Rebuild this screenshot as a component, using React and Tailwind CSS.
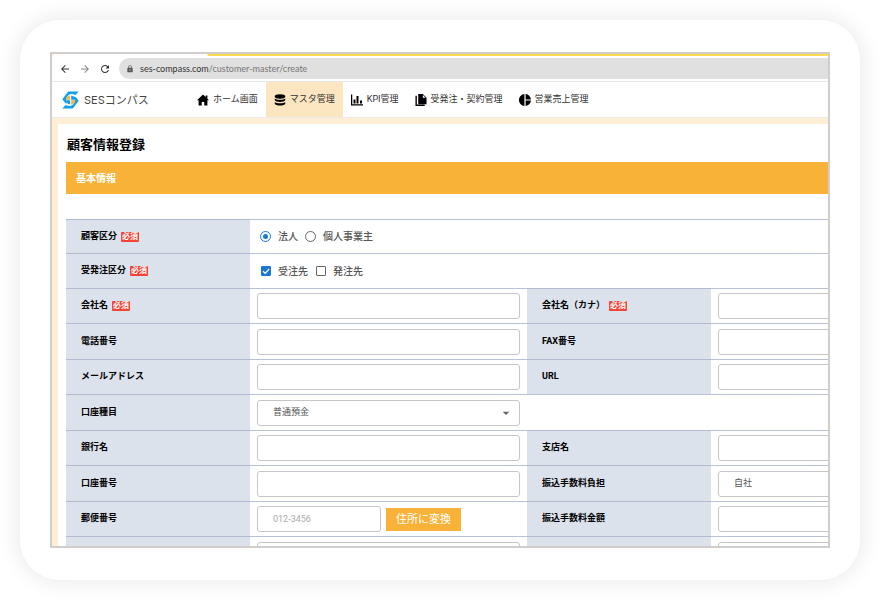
import { clsx } from 'clsx'
import { MdArrowBack, MdArrowDropDown, MdArrowForward, MdLock, MdPieChart, MdRefresh } from 'react-icons/md'

const NAV_ITEMS = [
  { label: 'ホーム画面',       icon: HomeIcon },
  { label: 'マスタ管理',       icon: DatabaseIcon, active: true },
  { label: 'KPI管理',          icon: StatsIcon },
  { label: '受発注・契約管理', icon: FilesIcon },
  { label: '営業売上管理',     icon: PieIcon },
]

/* Each row holds one or two fields; a single field spans the whole row */
const ROWS = [
  [{ id: 'kind', label: '顧客区分', required: true, type: 'radio', options: ['法人', '個人事業主'] }],
  [{ id: 'order', label: '受発注区分', required: true, type: 'checkbox', options: ['受注先', '発注先'] }],
  [{ id: 'company', label: '会社名', required: true }, { id: 'kana', label: '会社名（カナ）', required: true }],
  [{ id: 'tel', label: '電話番号' }, { id: 'fax', label: 'FAX番号' }],
  [{ id: 'mail', label: 'メールアドレス' }, { id: 'url', label: 'URL' }],
  [{ id: 'account-type', label: '口座種目', type: 'select', options: ['普通預金', '当座預金'] }],
  [{ id: 'bank', label: '銀行名' }, { id: 'branch', label: '支店名' }],
  [{ id: 'account', label: '口座番号' }, { id: 'fee-side', label: '振込手数料負担', type: 'select', options: ['自社', '先方'] }],
  [{ id: 'zip', label: '郵便番号', type: 'zip' }, { id: 'fee', label: '振込手数料金額' }],
  [{ id: 'address', label: '' }, { id: 'note', label: '' }],
]

const BOX = 'h-[26px] rounded-[3px] border border-[#c6c6c6] bg-white px-[15px] text-[9px] text-[#555] placeholder:text-[#aaa]'

/* ── Icons ─── */
function HomeIcon({ className }) {
  return (
    <svg viewBox="0 0 24 24" fill="currentColor" className={className} aria-hidden="true">
      <path d="M12 1 0 12.5h3.2V23h6.3v-7h5v7h6.3V12.5H24l-3.2-3.1V3h-3.6v3z" />
    </svg>
  )
}

function DatabaseIcon({ className }) {
  return (
    <svg viewBox="0 0 24 24" fill="currentColor" className={className} aria-hidden="true">
      <ellipse cx="12" cy="5" rx="10.5" ry="4.5" />
      <path d="M1.500 9c2 3.600 19 3.600 21 0v3c-1 5-20 5-21 0z" />
      <path d="M1.500 16c2 3.600 19 3.600 21 0v3c-1 5.500-20 5.500-21 0z" />
    </svg>
  )
}

function StatsIcon({ className }) {
  return (
    <svg viewBox="0 0 24 24" fill="currentColor" className={className} aria-hidden="true">
      <path d="M0 1h2.5v19.5H24V23H0z" />
      <path d="M5 11h4v8H5zM11 4h4v15h-4zM18 13h4v6h-4z" />
    </svg>
  )
}

function FilesIcon({ className }) {
  return (
    <svg viewBox="0 0 24 26" fill="currentColor" className={className} aria-hidden="true">
      <path d="M6 0h10l8 8v14H6zM16 2v6h6z" fillRule="evenodd" />
      <path d="M0 4h3v19h17v3H0z" />
    </svg>
  )
}

function PieIcon({ className }) {
  return <MdPieChart viewBox="2 2 20 20" className={className} />
}

function Logo() {
  return (
    <svg viewBox="0 0 52 54" className="h-[18px] w-[17px] shrink-0" aria-hidden="true">
      <path fill="#119fe8" d="M19 1h32L41 12C32 7 24 8 17 15c-6 7-6 15-1 23l-6-2L1 25z" />
      <path fill="#119fe8" d="M33 53H1l10-11c9 5 17 4 24-3 6-7 6-15 1-23l6 2 9 11z" />
      <path fill="#f8b237" d="M25 13v13H12c1-8 6-12 13-13zM28 41V28h13c-1 8-6 12-13 13z" />
      <path fill="#119fe8" d="M28 13c7 1 12 5 13 13H28zM25 41c-7-1-12-5-13-13h13z" />
    </svg>
  )
}

/* ── Browser bar ─── */
function BrowserBar() {
  return (
    <>
      <div className="flex h-[2px] shrink-0 bg-[#ffd94f]">
        <div className="w-[156px] rounded-t-sm bg-white" />
      </div>
      <div className="flex h-[26px] shrink-0 items-center border-b border-[#e6e8ea] bg-white text-[#333]">
        <div className="flex w-[67px] items-center gap-2 pl-[7px]">
          <button type="button" aria-label="戻る"><MdArrowBack className="size-3" /></button>
          <button type="button" aria-label="進む" className="text-[#888]"><MdArrowForward className="size-3" /></button>
          <button type="button" aria-label="再読み込み"><MdRefresh className="size-3" /></button>
        </div>
        <div className="flex h-[21px] flex-1 items-center gap-1.5 rounded-l-full bg-[#e0e0e0] pl-[7px] font-[Lato,sans-serif] text-[9px]">
          <MdLock className="size-2 text-[#555]" />
          <span className="whitespace-nowrap text-[#777]"><span className="text-[#333]">ses-compass.com</span>/customer-master/create</span>
        </div>
      </div>
    </>
  )
}

/* ── Site header ─── */
function Header() {
  return (
    <header className="flex h-9 shrink-0 border-b border-[#ecebe6] bg-white">
      <a href="#top" className="flex w-[137px] shrink-0 items-center gap-[5px] pl-2.5 font-[Inter,'Noto_Sans_CJK_JP',sans-serif] text-[11px] whitespace-nowrap text-[#444]">
        <Logo />
        <span className="pt-0.5">SESコンパス</span>
      </a>
      <nav className="flex">
        {NAV_ITEMS.map(({ label, icon: Icon, active }) => (
          <a
            key={label}
            href="#nav"
            className={clsx('flex items-center gap-1 px-2 text-[9px] whitespace-nowrap text-[#333]', active && 'bg-[#fce6c2]')}
          >
            <Icon className="size-3 shrink-0 text-black" />
            {label}
          </a>
        ))}
      </nav>
    </header>
  )
}

/* ── Form controls ─── */
function Choices({ field }) {
  const isRadio = field.type === 'radio'
  return (
    <div className="flex items-center gap-[7px] pl-[3px]">
      {field.options.map((option, i) => (
        <label key={option} className="flex items-center gap-[7px] text-[10px] font-medium text-[#555]">
          <span className="grid size-[11px] place-items-center">
            <input
              type={field.type}
              name={field.id}
              defaultChecked={i === 0}
              className={clsx(
                'peer col-start-1 row-start-1 appearance-none border border-[#666] checked:border-[#1976d2]',
                isRadio ? 'size-[11px] rounded-full' : 'size-[10px] rounded-[1px] checked:bg-[#1976d2]',
              )}
            />
            {isRadio ? (
              <span className="pointer-events-none col-start-1 row-start-1 hidden size-[5px] rounded-full bg-[#1976d2] peer-checked:block" />
            ) : (
              <svg viewBox="0 0 10 10" className="pointer-events-none col-start-1 row-start-1 hidden size-[10px] peer-checked:block" aria-hidden="true">
                <path d="M2 5.2 4.2 7.3 8.2 3" fill="none" stroke="#fff" strokeWidth="1.2" />
              </svg>
            )}
          </span>
          {option}
        </label>
      ))}
    </div>
  )
}

function Control({ field }) {
  if (field.type === 'radio' || field.type === 'checkbox') return <Choices field={field} />

  if (field.type === 'select') {
    return (
      <div className="grid w-[263px] items-center">
        <select id={field.id} className={clsx(BOX, 'col-start-1 row-start-1 appearance-none')}>
          {field.options.map((option) => <option key={option}>{option}</option>)}
        </select>
        <MdArrowDropDown className="pointer-events-none col-start-1 row-start-1 mr-1.5 size-4 justify-self-end text-[#666]" />
      </div>
    )
  }

  if (field.type === 'zip') {
    return (
      <div className="flex items-center gap-[5px]">
        <input id={field.id} type="text" placeholder="012-3456" className={clsx(BOX, 'w-[124px]')} />
        <button type="button" className="h-[23px] bg-[#f8b237] px-2.5 text-[11px] leading-none text-white">住所に変換</button>
      </div>
    )
  }

  return <input id={field.id} type="text" aria-label={field.label || field.id} className={clsx(BOX, 'block w-[263px]')} />
}

function FieldCells({ field, span }) {
  const isGroup = field.type === 'radio' || field.type === 'checkbox'
  const Tag = isGroup ? 'span' : 'label'
  return (
    <>
      <th scope="row" className="border-t border-[#b1bad2] bg-[#dce2ec] pl-[15px] text-left text-[9px] font-bold text-black">
        <div className="flex items-center gap-1">
          <Tag htmlFor={isGroup ? undefined : field.id}>{field.label}</Tag>
          {field.required && (
            <span className="rounded-[1px] bg-[#f44336] px-px text-[8px] leading-[10px] text-white">必須</span>
          )}
        </div>
      </th>
      <td colSpan={span} className="border-t border-[#b9c1d4] px-[7px]">
        <Control field={field} />
      </td>
    </>
  )
}

export default function App() {
  return (
    <div className="h-screen bg-white p-5 font-[Roboto,'Noto_Sans_CJK_JP',sans-serif]">
      <div className="flex h-full rounded-[40px] bg-white px-[30px] py-8 shadow-[0_0_24px_rgba(0,0,0,0.1)]">
        <div className="flex min-w-0 flex-1 flex-col overflow-hidden border-2 border-[#d0cdcb]">
          <BrowserBar />
          <Header />
          <div className="min-h-0 flex-1 overflow-hidden bg-[#fdeed5] pt-1.5 pl-1.5">
            <main className="bg-white pl-2">
              <h1 className="flex h-[38px] items-center pt-1 pl-px text-[13px] font-bold text-black">顧客情報登録</h1>
              <h2 className="mb-[25px] flex h-8 items-center bg-[#f8b237] pl-2.5 text-[10px] font-bold text-white">基本情報</h2>
              <table className="w-[922px] table-fixed border-separate border-spacing-0">
                <colgroup>
                  <col className="w-[184px]" />
                  <col className="w-[277px]" />
                  <col className="w-[184px]" />
                  <col className="w-[277px]" />
                </colgroup>
                <tbody>
                  {ROWS.map((fields, i) => (
                    <tr key={fields[0].id} className={clsx(i === 0 && 'h-[34px]', i > 0 && (i < 3 || i % 2 === 0) && 'h-[35px]', i >= 3 && i % 2 === 1 && 'h-9')}>
                      {fields.map((field) => (
                        <FieldCells key={field.id} field={field} span={fields.length === 1 ? 3 : 1} />
                      ))}
                    </tr>
                  ))}
                </tbody>
              </table>
            </main>
          </div>
        </div>
      </div>
    </div>
  )
}
